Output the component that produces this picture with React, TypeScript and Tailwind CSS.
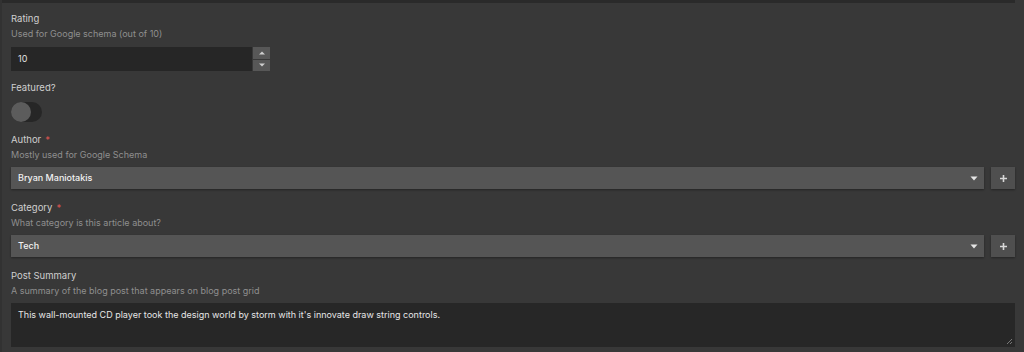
import React from "react";

function Caret() {
  return (
    <svg width="8" height="5" viewBox="0 0 8 5" className="shrink-0">
      <path d="M0.5 0.5 L7.5 0.5 L4 4.5 Z" fill="#e5e5e5" />
    </svg>
  );
}

function Plus() {
  return (
    <svg width="9" height="9" viewBox="0 0 9 9">
      <path d="M4.5 1 V8 M1 4.5 H8" stroke="#d8d8d8" strokeWidth="1.6" />
    </svg>
  );
}

function Label({ text, required }: { text: string; required?: boolean }) {
  return (
    <div className="text-[9.5px] leading-[12px] text-[#cfcfcf]">
      {text}
      {required && <span className="ml-[4px] text-[#d9534f]">*</span>}
    </div>
  );
}

function Hint({ text }: { text: string }) {
  return <div className="mt-[3px] text-[9px] leading-[12px] text-[#8f8f8f]">{text}</div>;
}

function SelectRow({ value }: { value: string }) {
  return (
    <div className="mt-[6px] flex gap-[7px]">
      <div className="flex h-[22px] flex-1 items-center justify-between bg-[#555555] pl-[7px] pr-[6px] shadow-[0_1px_2px_rgba(0,0,0,0.35)]">
        <span className="text-[9px] font-medium text-[#f2f2f2]">{value}</span>
        <Caret />
      </div>
      <div className="flex h-[22px] w-[24px] items-center justify-center bg-[#4f4f4f] shadow-[0_1px_2px_rgba(0,0,0,0.35)]">
        <Plus />
      </div>
    </div>
  );
}

export default function App() {
  return (
    <div
      className="h-[352px] w-[1024px] overflow-hidden bg-[#383838]"
      style={{ fontFamily: "Inter, 'Noto Sans', sans-serif" }}
    >
      <div className="flex h-full">
        <div className="w-[2px] bg-[#323232]" />
        <div className="flex-1 pr-[9px]">
          <div className="h-[3px] bg-[#2a2a2a]" />
          <div className="pl-[9px] pt-[10px]">
            <Label text="Rating" />
            <Hint text="Used for Google schema (out of 10)" />
            <div className="mt-[7px] flex h-[24px] w-[259px]">
              <div className="flex flex-1 items-center bg-[#262626] pl-[7px] text-[9px] text-[#e0e0e0]">10</div>
              <div className="ml-[1px] flex w-[17px] flex-col gap-[1px]">
                <div className="flex flex-1 items-center justify-center bg-[#575757]">
                  <svg width="6" height="4" viewBox="0 0 6 4"><path d="M0 3.5 L6 3.5 L3 0.5 Z" fill="#cfcfcf" /></svg>
                </div>
                <div className="flex flex-1 items-center justify-center bg-[#575757]">
                  <svg width="6" height="4" viewBox="0 0 6 4"><path d="M0 0.5 L6 0.5 L3 3.5 Z" fill="#cfcfcf" /></svg>
                </div>
              </div>
            </div>

            <div className="mt-[11px]">
              <Label text="Featured?" />
            </div>
            <div className="mt-[8px] flex h-[20px] w-[31px] items-center rounded-full bg-[#262626]">
              <div className="h-[20px] w-[20px] rounded-full bg-[#5c5c5c]" />
            </div>

            <div className="mt-[12px]">
              <Label text="Author" required />
            </div>
            <Hint text="Mostly used for Google Schema" />
            <SelectRow value="Bryan Maniotakis" />

            <div className="mt-[13px]">
              <Label text="Category" required />
            </div>
            <Hint text="What category is this article about?" />
            <SelectRow value="Tech" />

            <div className="mt-[13px]">
              <Label text="Post Summary" />
            </div>
            <Hint text="A summary of the blog post that appears on blog post grid" />
            <div className="relative mt-[6px] h-[44px] bg-[#272727] px-[7px] pt-[5px] text-[9px] text-[#e6e6e6]">
              This wall-mounted CD player took the design world by storm with it's innovate draw string controls.
              <svg width="7" height="7" viewBox="0 0 7 7" className="absolute bottom-[2px] right-[2px]">
                <path d="M6 1 L1 6 M6 4 L4 6" stroke="#777" strokeWidth="1" />
              </svg>
            </div>
          </div>
        </div>
      </div>
    </div>
  );
}
